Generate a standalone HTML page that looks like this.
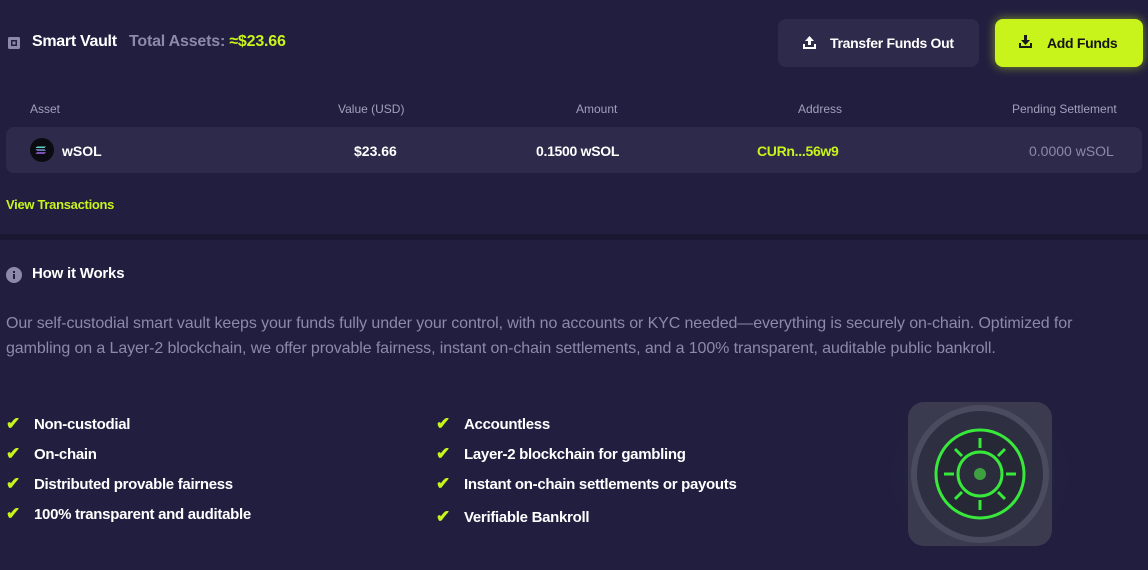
<!DOCTYPE html>
<html><head><meta charset="utf-8"><style>
*{margin:0;padding:0;box-sizing:border-box}
body{width:1148px;height:570px;background:#221e40;font-family:"Liberation Sans",sans-serif;color:#fff;position:relative;overflow:hidden}
.a{position:absolute;white-space:nowrap}
.lime{color:#c8f41c}
.hdr{font-size:12px;color:#a39fba}
.li{font-size:15px;font-weight:bold;letter-spacing:-0.3px}
.ck{color:#c8f41c;font-size:17px;font-weight:bold}
</style></head><body>
<svg class="a" style="left:7px;top:36px" width="14" height="14" viewBox="0 0 14 14"><rect x="1" y="1" width="12" height="12" rx="1.5" fill="#8e89a8"/><rect x="4" y="4" width="6" height="6" fill="#221e40"/><rect x="5.5" y="5.5" width="3" height="3" fill="#8e89a8"/></svg>
<div class="a" style="left:32px;top:33px;font-size:16px;font-weight:bold;letter-spacing:-0.3px">Smart Vault</div>
<div class="a" style="left:129px;top:33px;font-size:16px;font-weight:bold;color:#8e89a8;letter-spacing:-0.2px">Total Assets: <span class="lime">≈$23.66</span></div>
<div class="a" style="left:778px;top:19px;width:201px;height:48px;background:#2e2a4b;border-radius:8px"></div>
<svg class="a" style="left:802px;top:35px" width="15" height="15" viewBox="0 0 15 15"><path d="M7.5 1L3 6h3v4h3V6h3z" fill="#fff"/><path d="M1 9v5h13V9h-2v3H3V9z" fill="#fff"/></svg>
<div class="a" style="left:830px;top:35px;font-size:14px;font-weight:bold;letter-spacing:-0.3px">Transfer Funds Out</div>
<div class="a" style="left:995px;top:19px;width:148px;height:48px;background:#c8f41c;border-radius:8px;box-shadow:0 0 10px rgba(200,244,28,0.55)"></div>
<svg class="a" style="left:1018px;top:34px" width="15" height="15" viewBox="0 0 15 15"><path d="M6 1h3v5h3l-4.5 5L3 6h3z" fill="#1a1a1a"/><path d="M1 9v5h13V9h-2v3H3V9z" fill="#1a1a1a"/></svg>
<div class="a" style="left:1047px;top:35px;font-size:14px;font-weight:bold;color:#151515;letter-spacing:-0.3px">Add Funds</div>
<div class="a hdr" style="left:30px;top:102px">Asset</div>
<div class="a hdr" style="left:338px;top:102px">Value (USD)</div>
<div class="a hdr" style="left:576px;top:102px">Amount</div>
<div class="a hdr" style="left:798px;top:102px">Address</div>
<div class="a hdr" style="left:1012px;top:102px">Pending Settlement</div>
<div class="a" style="left:6px;top:127px;width:1136px;height:46px;background:#2e2a4b;border-radius:8px"></div>
<svg class="a" style="left:30px;top:138px" width="24" height="24" viewBox="0 0 24 24"><circle cx="12" cy="12" r="12" fill="#0b0b12"/><path d="M7 8.5h9l-1.5 1.5h-9z" fill="#5fd5c6"/><path d="M5.5 11.3h9l1.5 1.5H7z" fill="#7f92d8"/><path d="M7 14.2h9l-1.5 1.5h-9z" fill="#a065e8"/></svg>
<div class="a" style="left:62px;top:143px;font-size:14px;font-weight:bold">wSOL</div>
<div class="a" style="left:354px;top:143px;font-size:14px;font-weight:bold">$23.66</div>
<div class="a" style="left:536px;top:143px;font-size:14px;font-weight:bold;letter-spacing:-0.3px">0.1500 wSOL</div>
<div class="a lime" style="left:757px;top:143px;font-size:14px;font-weight:bold;letter-spacing:-0.3px">CURn...56w9</div>
<div class="a" style="left:1029px;top:143px;font-size:14px;color:#8e89a8">0.0000 wSOL</div>
<div class="a lime" style="left:6px;top:197px;font-size:13px;font-weight:bold;letter-spacing:-0.3px">View Transactions</div>
<div class="a" style="left:0;top:234px;width:1148px;height:6px;background:#1a1733"></div>
<svg class="a" style="left:6px;top:267px" width="16" height="16" viewBox="0 0 16 16"><circle cx="8" cy="8" r="8" fill="#8e89a8"/><rect x="7" y="7" width="2" height="5" fill="#221e40"/><rect x="7" y="4" width="2" height="2" fill="#221e40"/></svg>
<div class="a" style="left:32px;top:265px;font-size:15px;font-weight:bold;letter-spacing:-0.2px">How it Works</div>
<div class="a" style="left:6px;top:311px;font-size:16px;color:#8e89a8;line-height:25px;letter-spacing:-0.1px">Our self-custodial smart vault keeps your funds fully under your control, with no accounts or KYC needed—everything is securely on-chain. Optimized for<br>gambling on a Layer-2 blockchain, we offer provable fairness, instant on-chain settlements, and a 100% transparent, auditable public bankroll.</div>
<div class="a ck" style="left:6px;top:414px">✔</div><div class="a li" style="left:34px;top:416px">Non-custodial</div>
<div class="a ck" style="left:6px;top:444px">✔</div><div class="a li" style="left:34px;top:446px">On-chain</div>
<div class="a ck" style="left:6px;top:474px">✔</div><div class="a li" style="left:34px;top:476px">Distributed provable fairness</div>
<div class="a ck" style="left:6px;top:504px">✔</div><div class="a li" style="left:34px;top:506px">100% transparent and auditable</div>
<div class="a ck" style="left:436px;top:414px">✔</div><div class="a li" style="left:464px;top:416px">Accountless</div>
<div class="a ck" style="left:436px;top:444px">✔</div><div class="a li" style="left:464px;top:446px">Layer-2 blockchain for gambling</div>
<div class="a ck" style="left:436px;top:474px">✔</div><div class="a li" style="left:464px;top:476px">Instant on-chain settlements or payouts</div>
<div class="a ck" style="left:436px;top:507px">✔</div><div class="a li" style="left:464px;top:509px">Verifiable Bankroll</div>
<svg class="a" style="left:880px;top:390px" width="200" height="170" viewBox="0 0 200 170">
<defs><radialGradient id="g" cx="50%" cy="50%" r="50%"><stop offset="0" stop-color="#2c4a3a"/><stop offset="1" stop-color="#221e40" stop-opacity="0"/></radialGradient></defs>
<rect width="200" height="170" fill="url(#g)"/>
<rect x="28" y="12" width="144" height="144" rx="16" fill="#3a3b4e"/>
<circle cx="100" cy="84" r="66" fill="#2e2f40" stroke="#4a4b5e" stroke-width="6"/>
<circle cx="100" cy="84" r="44" fill="#262836" stroke="#38e83a" stroke-width="3"/>
<circle cx="100" cy="84" r="22" fill="#2b2d3c" stroke="#38e83a" stroke-width="3"/>
<circle cx="100" cy="84" r="6" fill="#3fa041"/>
<g stroke="#38e83a" stroke-width="3"><path d="M100 48v10M100 110v10M64 84h10M126 84h10M75 59l7 7M118 102l7 7M125 59l-7 7M82 102l-7 7"/></g>
</svg>
</body></html>
